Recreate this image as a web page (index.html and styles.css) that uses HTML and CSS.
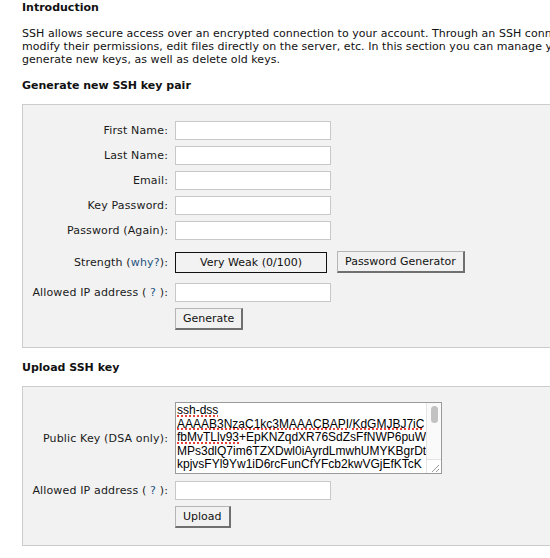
FILE: index.html
```html
<!DOCTYPE html>
<html>
<head>
<meta charset="utf-8">
<link rel="stylesheet" href="styles.css">
</head>
<body>
<div class="page">
  <h3 class="heading heading-first">Introduction</h3>
  <p class="intro">SSH allows secure access over an encrypted connection to your account. Through an SSH connection users can upload and download files,<br>modify their permissions, edit files directly on the server, etc. In this section you can manage your SSH keys, which allow you to<br>generate new keys, as well as delete old keys.</p>

  <h3 class="heading">Generate new SSH key pair</h3>
  <div class="panel">
    <div class="row"><label class="label">First Name:</label><input class="field" type="text"></div>
    <div class="row"><label class="label">Last Name:</label><input class="field" type="text"></div>
    <div class="row"><label class="label">Email:</label><input class="field" type="text"></div>
    <div class="row"><label class="label">Key Password:</label><input class="field" type="password"></div>
    <div class="row"><label class="label">Password (Again):</label><input class="field" type="password"></div>
    <div class="row row-strength">
      <label class="label">Strength (<a class="link">why?</a>):</label>
      <div class="controls">
        <div class="strength">Very Weak (0/100)</div>
        <button class="btn btn-gen">Password Generator</button>
      </div>
    </div>
    <div class="row row-after-strength"><label class="label">Allowed IP address ( <a class="link">?</a> ):</label><input class="field" type="text"></div>
    <div class="row"><span class="label"></span><button class="btn">Generate</button></div>
  </div>

  <h3 class="heading">Upload SSH key</h3>
  <div class="panel panel-upload">
    <div class="row">
      <label class="label">Public Key (DSA only):</label>
      <div class="textarea">
        <div class="ta-text"><span class="sp">ssh-dss</span><br><span class="sp">AAAAB3NzaC1kc3MAAACBAPI</span>/<span class="sp">KdGMJBJ7iC</span><br><span class="sp">fbMvTLlv93</span>+EpKNZqdXR76SdZsFfNWP6puW<br>MPs3dlQ7im6TZXDwl0iAyrdLmwhUMYKBgrDt<br>kpjvsFYl9Yw1iD6rcFunCfYFcb2kwVGjEfKTcK</div>
        <div class="ta-bar">
          <div class="ta-thumb"></div>
          <div class="ta-grip">
            <svg width="13" height="13" viewBox="0 0 13 13"><path d="M12 5 L5 12 M12 9 L9 12" stroke="#9a9a9a" stroke-width="1"/></svg>
          </div>
        </div>
      </div>
    </div>
    <div class="row row-ip2"><label class="label">Allowed IP address ( <a class="link">?</a> ):</label><input class="field" type="text"></div>
    <div class="row"><span class="label"></span><button class="btn">Upload</button></div>
  </div>
</div>
</body>
</html>
```

FILE: styles.css
```css
html, body {
  margin: 0;
  padding: 0;
  overflow: hidden;
  background: #fff;
}
body {
  font-family: "DejaVu Sans", Verdana, sans-serif;
  font-size: 11px;
  line-height: 13px;
  color: #111;
}
.page {
  padding: 1px 0 0 22px;
}
.heading {
  margin: 0;
  font-size: 11px;
  line-height: 13px;
  font-weight: bold;
  color: #111;
}
.intro {
  margin: 13px 0 13px 0;
  white-space: nowrap;
  letter-spacing: 0.05px;
}
.panel {
  margin: 12px 0 13px 0;
  width: 640px;
  border: 1px solid #cccccc;
  background: #f2f2f2;
  padding: 16px 0 17px 0;
}
.panel-upload {
  padding-top: 15px;
}
.row {
  display: grid;
  grid-template-columns: 145px auto;
  column-gap: 7px;
  align-items: center;
  justify-items: start;
}
.row + .row {
  margin-top: 6px;
}
.row.row-strength {
  margin-top: 11px;
}
.row.row-after-strength {
  margin-top: 10px;
}
.row.row-ip2 {
  margin-top: 7px;
}
.label {
  justify-self: end;
  text-align: right;
  white-space: nowrap;
  color: #1a1a1a;
  letter-spacing: 0.15px;
}
.link {
  color: #24527f;
  text-decoration: none;
}
.field {
  box-sizing: border-box;
  width: 156px;
  height: 19px;
  margin: 0;
  padding: 0 2px;
  border: 1px solid #c8c8c8;
  background: #fff;
  font: inherit;
}
.controls {
  display: flex;
  align-items: center;
  gap: 10px;
}
.strength {
  box-sizing: border-box;
  width: 152px;
  height: 21px;
  border: 1px solid #111;
  background: #f2f2f2;
  display: flex;
  align-items: center;
  justify-content: center;
  color: #111;
}
.btn {
  box-sizing: border-box;
  height: 22px;
  margin: 0;
  padding: 0 7px;
  font: inherit;
  white-space: nowrap;
  color: #111;
  background: #f1f1f1;
  border-style: solid;
  border-width: 1px 2px 2px 1px;
  border-color: #b5b5b5 #707070 #707070 #b5b5b5;
  border-radius: 0;
}
.btn-gen {
  min-width: 126px;
}
.textarea {
  box-sizing: border-box;
  width: 267px;
  height: 72px;
  border: 1px solid #9a9a9a;
  background: #fff;
  display: flex;
}
.ta-text {
  flex: 1;
  overflow: hidden;
  white-space: nowrap;
  padding: 1px 0 0 1px;
  font-family: "Liberation Sans", Arial, sans-serif;
  font-size: 12px;
  line-height: 13.6px;
  color: #000;
}
.sp {
  text-decoration: underline dotted #e8403a;
  text-decoration-thickness: 2px;
  text-underline-offset: 1px;
}
.ta-bar {
  width: 14px;
  border-left: 1px solid #e4e4e4;
  background: #fafafa;
  display: flex;
  flex-direction: column;
  justify-content: space-between;
}
.ta-thumb {
  margin: 3px auto 0 auto;
  width: 7px;
  height: 17px;
  border-radius: 4px;
  background: #c2c2c2;
}
.ta-grip {
  height: 13px;
  border-top: 1px solid #e4e4e4;
  background: #fff;
  display: flex;
}
```
